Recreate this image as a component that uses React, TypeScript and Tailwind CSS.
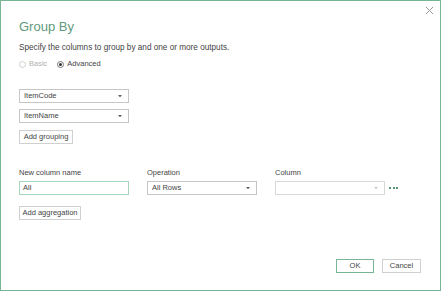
import { useState } from "react";

function Caret({ color }: { color: string }) {
  return (
    <svg width="4" height="2.5" viewBox="0 0 4 2.5" className="shrink-0">
      <path d="M0 0h4L2 2.5z" fill={color} />
    </svg>
  );
}

function Select({ value, disabled }: { value?: string; disabled?: boolean }) {
  return (
    <div
      className={
        "flex h-[14px] w-[110px] items-center justify-between border pl-[4px] pr-[6px] text-[7.5px] " +
        (disabled ? "border-[#d8d8d8] text-[#999]" : "border-[#c6c6c6] text-[#444]")
      }
    >
      <span>{value}</span>
      <Caret color={disabled ? "#cacaca" : "#666"} />
    </div>
  );
}

function Btn({ label, w, ok }: { label: string; w: string; ok?: boolean }) {
  return (
    <button
      className={
        "flex h-[14px] items-center justify-center bg-white text-[7.5px] text-[#444] " +
        w +
        (ok ? " border border-[#7ab496]" : " border border-[#d0d0d0]")
      }
    >
      {label}
    </button>
  );
}

export default function App() {
  const [mode] = useState("advanced");
  return (
    <div
      className="flex h-[291px] w-[441px] flex-col border border-[#7ab496] bg-white text-[#444]"
      style={{ fontFamily: '"Liberation Sans", Arial, sans-serif' }}
    >
      <div className="flex justify-end pr-[6px] pt-[5px]">
        <svg width="9" height="9" viewBox="0 0 9 9">
          <path d="M1 1l7 7M8 1L1 8" stroke="#9a9a9a" strokeWidth="1" />
        </svg>
      </div>
      <div className="flex flex-1 flex-col px-[18px]">
        <h1 className="mt-[4px] text-[13px] font-light leading-[16px] text-[#5f9a7c]">Group By</h1>
        <p className="mt-[8px] text-[8.2px] leading-[10px]">
          Specify the columns to group by and one or more outputs.
        </p>
        <div className="mt-[6px] flex items-center text-[7.5px] leading-[10px]">
          <span className="flex items-center gap-[3px] text-[#b0b0b0]">
            <span className="h-[7px] w-[7px] rounded-full border border-[#d0d0d0]" />
            Basic
          </span>
          <span className="ml-[10px] flex items-center gap-[3px]">
            <span className="flex h-[7px] w-[7px] items-center justify-center rounded-full border border-[#777]">
              {mode === "advanced" && <span className="h-[3px] w-[3px] rounded-full bg-[#333]" />}
            </span>
            Advanced
          </span>
        </div>
        <div className="mt-[20px] flex flex-col gap-[6px]">
          <Select value="ItemCode" />
          <Select value="ItemName" />
        </div>
        <div className="mt-[7px]">
          <Btn label="Add grouping" w="w-[54px]" />
        </div>
        <div className="mt-[24px] flex gap-[18px] text-[7.5px]">
          <div className="flex flex-col gap-[3px]">
            <span className="leading-[10px]">New column name</span>
            <div className="flex h-[14px] w-[110px] items-center border border-[#a6d6bc] pl-[3px]">All</div>
          </div>
          <div className="flex flex-col gap-[3px]">
            <span className="leading-[10px]">Operation</span>
            <Select value="All Rows" />
          </div>
          <div className="flex flex-col gap-[3px]">
            <span className="leading-[10px]">Column</span>
            <div className="flex items-center gap-[4px]">
              <Select disabled />
              <span className="flex gap-[1.5px]">
                <span className="h-[2px] w-[2px] rounded-full bg-[#217346]" />
                <span className="h-[2px] w-[2px] rounded-full bg-[#217346]" />
                <span className="h-[2px] w-[2px] rounded-full bg-[#217346]" />
              </span>
            </div>
          </div>
        </div>
        <div className="mt-[11px]">
          <Btn label="Add aggregation" w="w-[62px]" />
        </div>
        <div className="mt-auto mb-[17px] flex justify-end gap-[8px] pr-[1px]">
          <Btn label="OK" w="w-[38px]" ok />
          <Btn label="Cancel" w="w-[39px]" />
        </div>
      </div>
    </div>
  );
}
